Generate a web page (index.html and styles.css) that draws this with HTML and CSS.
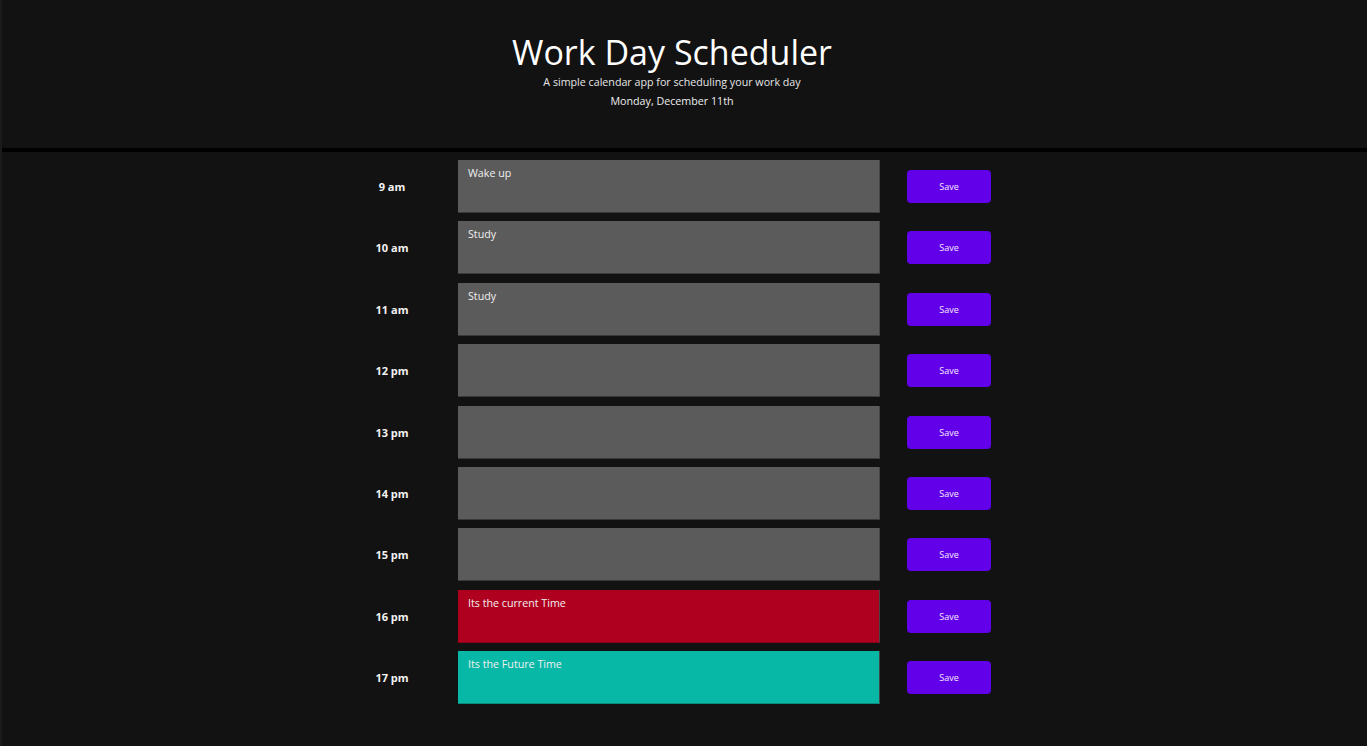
FILE: index.html
```html
<!DOCTYPE html>
<html lang="en">
<head>
<meta charset="utf-8">
<title>Work Day Scheduler</title>
<link rel="stylesheet" href="styles.css">
</head>
<body>
  <header class="jumbotron">
    <h1 class="title">Work Day Scheduler</h1>
    <p class="lead">A simple calendar app for scheduling your work day</p>
    <p class="date">Monday, December 11th</p>
  </header>
  <main class="planner">
    <div class="row"><div class="hour">9 am</div><textarea class="desc past">Wake up</textarea><button class="save">Save</button></div>
    <div class="row"><div class="hour">10 am</div><textarea class="desc past">Study</textarea><button class="save">Save</button></div>
    <div class="row"><div class="hour">11 am</div><textarea class="desc past">Study</textarea><button class="save">Save</button></div>
    <div class="row"><div class="hour">12 pm</div><textarea class="desc past"></textarea><button class="save">Save</button></div>
    <div class="row"><div class="hour">13 pm</div><textarea class="desc past"></textarea><button class="save">Save</button></div>
    <div class="row"><div class="hour">14 pm</div><textarea class="desc past"></textarea><button class="save">Save</button></div>
    <div class="row"><div class="hour">15 pm</div><textarea class="desc past"></textarea><button class="save">Save</button></div>
    <div class="row"><div class="hour">16 pm</div><textarea class="desc present">Its the current Time</textarea><button class="save">Save</button></div>
    <div class="row"><div class="hour">17 pm</div><textarea class="desc future">Its the Future Time</textarea><button class="save">Save</button></div>
  </main>
</body>
</html>
```
FILE: styles.css
```css
html, body {
  margin: 0;
  padding: 0;
  background: #121212;
  color: #fff;
  font-family: "Open Sans", "DejaVu Sans", sans-serif;
  min-height: 746px;
}

body {
  border-left: 2px solid #1b1b1b;
}

.jumbotron {
  height: 148px;
  border-bottom: 4px solid #000;
  box-sizing: content-box;
  display: flex;
  flex-direction: column;
  align-items: center;
  padding-right: 25px;
}

.title {
  margin: 31px 0 0;
  font-size: 34px;
  font-weight: 400;
  line-height: 43px;
  color: #fff;
}

.lead {
  margin: 0;
  font-size: 10.7px;
  line-height: 16px;
  color: #e6e6e6;
}

.date {
  margin: 3px 0 0;
  font-size: 10.7px;
  line-height: 16px;
  color: #eee;
}

.planner {
  width: 647px;
  margin: 0 auto;
  padding-top: 8px;
  display: flex;
  flex-direction: column;
  gap: 8.4px;
  position: relative;
  left: -1px;
}

.row {
  display: flex;
  align-items: center;
  height: 53px;
}

.hour {
  width: 64px;
  text-align: center;
  font-weight: 700;
  font-size: 11px;
  color: #f2f2f2;
  margin-right: 34px;
}

.desc {
  width: 422px;
  height: 53px;
  box-sizing: border-box;
  border: none;
  border-right: 1px solid #444;
  border-bottom: 1px solid #3a3a3a;
  padding: 6px 10px;
  font-family: "Open Sans", "DejaVu Sans", sans-serif;
  font-size: 10.7px;
  line-height: 14px;
  color: #f0f0f0;
  resize: none;
  outline: none;
  margin: 0;
}

.past { background: #5b5b5b; }
.present { background: #b00020; border-bottom-color: #8a0019; }
.future { background: #07b8a7; border-bottom-color: #058a7d; }

.save {
  margin-left: 27px;
  width: 84px;
  height: 33px;
  border: none;
  border-radius: 4px;
  background: #6200ea;
  color: #f4eaff;
  font-family: "Open Sans", "DejaVu Sans", sans-serif;
  font-size: 9px;
  padding: 0;
}
```
